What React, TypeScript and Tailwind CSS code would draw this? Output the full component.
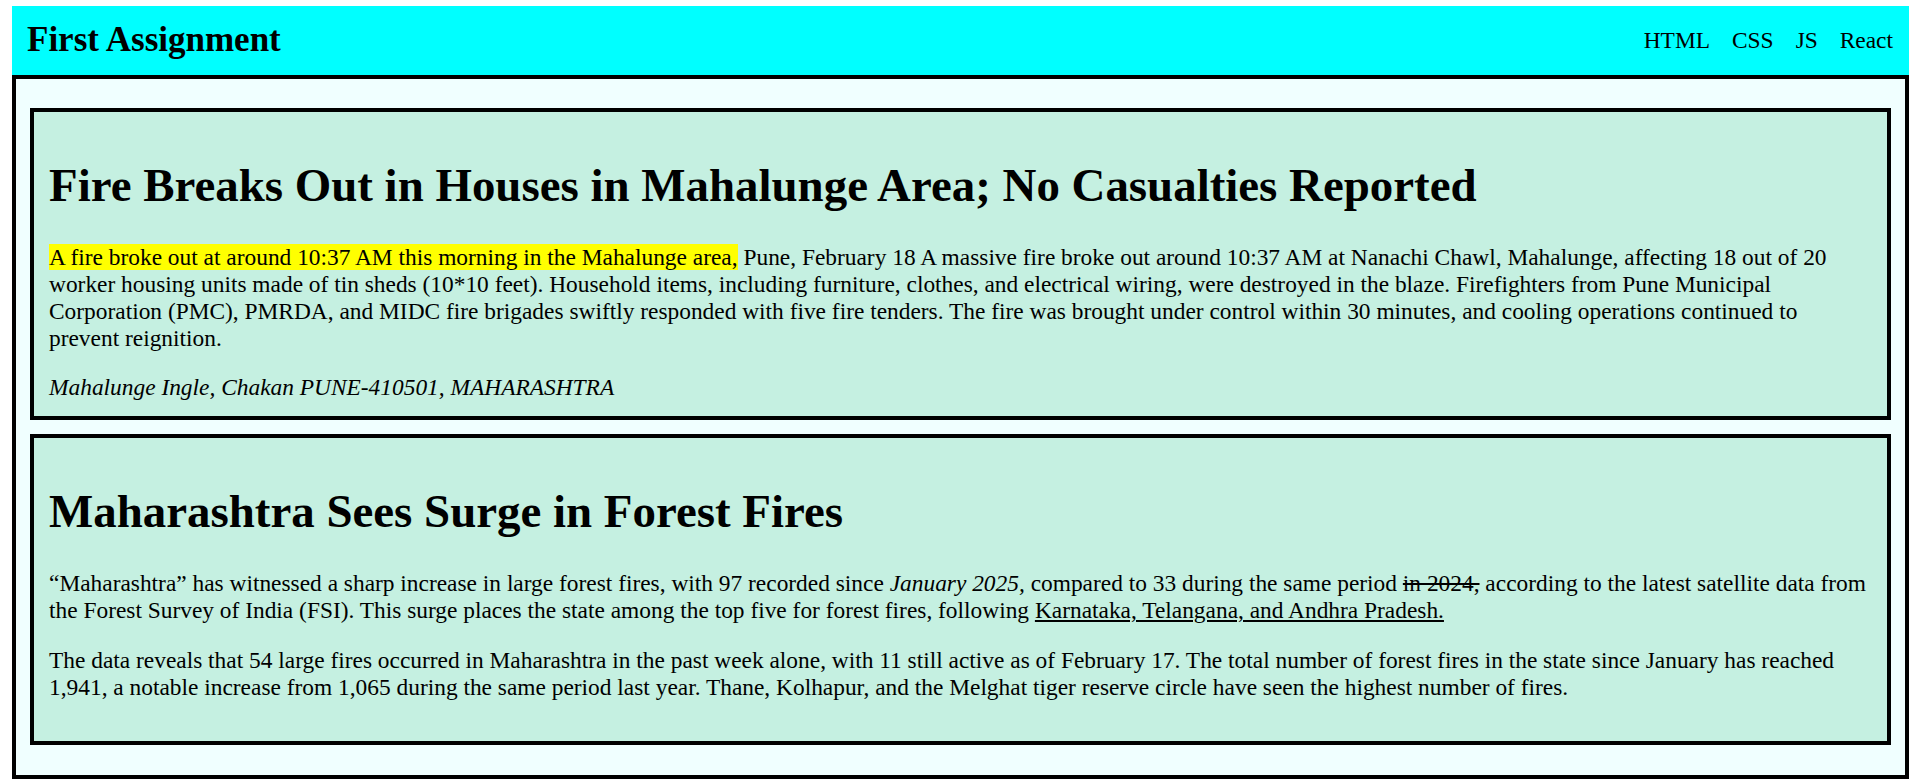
import React from "react";

export default function App() {
  return (
    <div
      className="bg-white pt-[6px] pl-[12px] pr-[11px] pb-[6px] text-black text-[23.4px] leading-[1.149]"
      style={{ fontFamily: '"Liberation Serif", "Times New Roman", serif' }}
    >
      <header className="h-[69px] bg-[#00ffff] flex items-center justify-between pl-[15px] pr-[16px]">
        <div className="font-bold text-[35px] leading-[1.149]">First Assignment</div>
        <nav className="flex gap-[22px]">
          <span>HTML</span>
          <span>CSS</span>
          <span>JS</span>
          <span>React</span>
        </nav>
      </header>
      <main className="border-[4px] border-black bg-[#f0ffff] pt-[29px] pb-[30px] px-[14px] flex flex-col gap-[14px]">
        <article className="border-[4px] border-black bg-[#c5f0e1] p-[15px]">
          <h1 className="font-bold text-[46.9px] leading-[1.149] mt-[32px] mb-[31px]">
            Fire Breaks Out in Houses in Mahalunge Area; No Casualties Reported
          </h1>
          <p className="my-[23px]">
            <mark className="bg-[#ffff00] text-black">
              A fire broke out at around 10:37 AM this morning in the Mahalunge area,
            </mark>{" "}
            Pune, February 18 A massive fire broke out around 10:37 AM at Nanachi Chawl, Mahalunge,
            affecting 18 out of 20 worker housing units made of tin sheds (10*10 feet). Household
            items, including furniture, clothes, and electrical wiring, were destroyed in the blaze.
            Firefighters from Pune Municipal Corporation (PMC), PMRDA, and MIDC fire brigades swiftly
            responded with five fire tenders. The fire was brought under control within 30 minutes,
            and cooling operations continued to prevent reignition.
          </p>
          <address className="italic">Mahalunge Ingle, Chakan PUNE-410501, MAHARASHTRA</address>
        </article>
        <article className="border-[4px] border-black bg-[#c5f0e1] p-[15px]">
          <h1 className="font-bold text-[46.9px] leading-[1.149] mt-[32px] mb-[31px]">
            Maharashtra Sees Surge in Forest Fires
          </h1>
          <p className="my-[23px]">
            “Maharashtra” has witnessed a sharp increase in large forest fires, with 97 recorded since{" "}
            <i>January 2025,</i> compared to 33 during the same period <s>in 2024,</s> according to
            the latest satellite data from the Forest Survey of India (FSI). This surge places the
            state among the top five for forest fires, following{" "}
            <u>Karnataka, Telangana, and Andhra Pradesh.</u>
          </p>
          <p className="mt-[23px] mb-[25px]">
            The data reveals that 54 large fires occurred in Maharashtra in the past week alone, with
            11 still active as of February 17. The total number of forest fires in the state since
            January has reached 1,941, a notable increase from 1,065 during the same period last year.
            Thane, Kolhapur, and the Melghat tiger reserve circle have seen the highest number of
            fires.
          </p>
        </article>
      </main>
    </div>
  );
}
